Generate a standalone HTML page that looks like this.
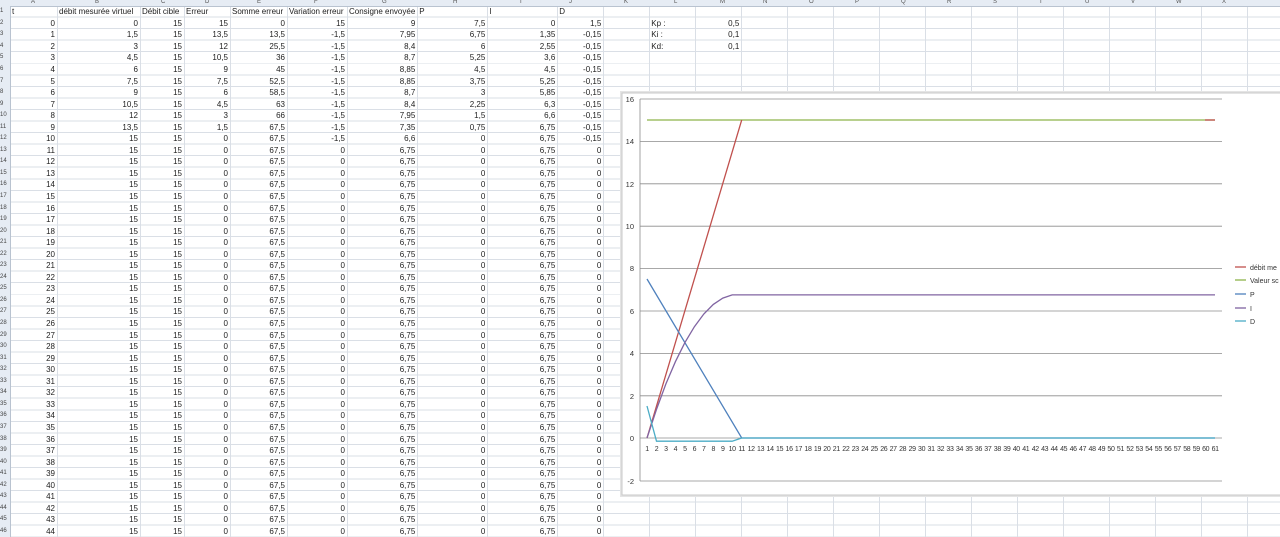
<!DOCTYPE html>
<html><head><meta charset="utf-8"><style>
body{margin:0;width:1280px;height:537px;overflow:hidden;background:#fff;position:relative;font-family:"Liberation Sans",sans-serif;}
#g{position:absolute;left:0;top:6px;width:1280px;height:531px;background:repeating-linear-gradient(to bottom,transparent 0,transparent 10.55px,#dadfe6 10.55px,#dadfe6 11.55px);}
.v{position:absolute;top:0;width:1px;height:537px;background:#dadfe6;}
#hdr{position:absolute;left:0;top:0;width:1280px;height:6px;background:#e6ecf4;border-bottom:1px solid #b9c3d0;font-size:6px;color:#555;}
#hdr span{position:absolute;top:-1px;}
#rh{position:absolute;left:0;top:6px;width:10px;height:531px;background:#e6ecf4;border-right:1px solid #b9c3d0;}
table{position:absolute;left:0;top:6px;border-collapse:collapse;table-layout:fixed;font-size:8px;color:#222;}
td{height:11.55px;padding:0 2px;white-space:nowrap;overflow:hidden;text-align:right;line-height:11px;box-sizing:border-box;}
td.l{text-align:left;}
td.r0{font-size:6px;color:#444;text-align:left;padding:0;}
</style></head><body>
<div id="g"></div>
<div class="v" style="left:57px"></div><div class="v" style="left:140px"></div><div class="v" style="left:184px"></div><div class="v" style="left:230px"></div><div class="v" style="left:287px"></div><div class="v" style="left:347px"></div><div class="v" style="left:417px"></div><div class="v" style="left:487px"></div><div class="v" style="left:557px"></div><div class="v" style="left:603px"></div><div class="v" style="left:649px"></div><div class="v" style="left:695px"></div><div class="v" style="left:741px"></div><div class="v" style="left:787px"></div><div class="v" style="left:833px"></div><div class="v" style="left:879px"></div><div class="v" style="left:925px"></div><div class="v" style="left:971px"></div><div class="v" style="left:1017px"></div><div class="v" style="left:1063px"></div><div class="v" style="left:1109px"></div><div class="v" style="left:1155px"></div><div class="v" style="left:1201px"></div><div class="v" style="left:1247px"></div>
<div id="hdr"><span style="left:31px">A</span><span style="left:95px">B</span><span style="left:161px">C</span><span style="left:205px">D</span><span style="left:257px">E</span><span style="left:314px">F</span><span style="left:382px">G</span><span style="left:453px">H</span><span style="left:520px">I</span><span style="left:569px">J</span><span style="left:624px">K</span><span style="left:674px">L</span><span style="left:720px">M</span><span style="left:763px">N</span><span style="left:809px">O</span><span style="left:855px">P</span><span style="left:901px">Q</span><span style="left:947px">R</span><span style="left:993px">S</span><span style="left:1039px">T</span><span style="left:1085px">U</span><span style="left:1131px">V</span><span style="left:1176px">W</span><span style="left:1222px">X</span></div>
<div id="rh"></div>
<table>
<colgroup><col style="width:10px"><col style="width:47px"><col style="width:83px"><col style="width:44px"><col style="width:46px"><col style="width:57px"><col style="width:60px"><col style="width:70px"><col style="width:70px"><col style="width:70px"><col style="width:46px"><col style="width:46px"><col style="width:46px"><col style="width:46px"></colgroup>
<tr><td class="r0">1</td><td class="l">t</td><td class="l">débit mesurée virtuel</td><td class="l">Débit cible</td><td class="l">Erreur</td><td class="l">Somme erreur</td><td class="l">Variation erreur</td><td class="l">Consigne envoyée</td><td class="l">P</td><td class="l">I</td><td class="l">D</td><td></td><td></td><td></td></tr>
<tr><td class="r0">2</td><td>0</td><td>0</td><td>15</td><td>15</td><td>0</td><td>15</td><td>9</td><td>7,5</td><td>0</td><td>1,5</td><td></td><td class="l">Kp :</td><td>0,5</td></tr>
<tr><td class="r0">3</td><td>1</td><td>1,5</td><td>15</td><td>13,5</td><td>13,5</td><td>-1,5</td><td>7,95</td><td>6,75</td><td>1,35</td><td>-0,15</td><td></td><td class="l">Ki :</td><td>0,1</td></tr>
<tr><td class="r0">4</td><td>2</td><td>3</td><td>15</td><td>12</td><td>25,5</td><td>-1,5</td><td>8,4</td><td>6</td><td>2,55</td><td>-0,15</td><td></td><td class="l">Kd:</td><td>0,1</td></tr>
<tr><td class="r0">5</td><td>3</td><td>4,5</td><td>15</td><td>10,5</td><td>36</td><td>-1,5</td><td>8,7</td><td>5,25</td><td>3,6</td><td>-0,15</td></tr>
<tr><td class="r0">6</td><td>4</td><td>6</td><td>15</td><td>9</td><td>45</td><td>-1,5</td><td>8,85</td><td>4,5</td><td>4,5</td><td>-0,15</td></tr>
<tr><td class="r0">7</td><td>5</td><td>7,5</td><td>15</td><td>7,5</td><td>52,5</td><td>-1,5</td><td>8,85</td><td>3,75</td><td>5,25</td><td>-0,15</td></tr>
<tr><td class="r0">8</td><td>6</td><td>9</td><td>15</td><td>6</td><td>58,5</td><td>-1,5</td><td>8,7</td><td>3</td><td>5,85</td><td>-0,15</td></tr>
<tr><td class="r0">9</td><td>7</td><td>10,5</td><td>15</td><td>4,5</td><td>63</td><td>-1,5</td><td>8,4</td><td>2,25</td><td>6,3</td><td>-0,15</td></tr>
<tr><td class="r0">10</td><td>8</td><td>12</td><td>15</td><td>3</td><td>66</td><td>-1,5</td><td>7,95</td><td>1,5</td><td>6,6</td><td>-0,15</td></tr>
<tr><td class="r0">11</td><td>9</td><td>13,5</td><td>15</td><td>1,5</td><td>67,5</td><td>-1,5</td><td>7,35</td><td>0,75</td><td>6,75</td><td>-0,15</td></tr>
<tr><td class="r0">12</td><td>10</td><td>15</td><td>15</td><td>0</td><td>67,5</td><td>-1,5</td><td>6,6</td><td>0</td><td>6,75</td><td>-0,15</td></tr>
<tr><td class="r0">13</td><td>11</td><td>15</td><td>15</td><td>0</td><td>67,5</td><td>0</td><td>6,75</td><td>0</td><td>6,75</td><td>0</td></tr>
<tr><td class="r0">14</td><td>12</td><td>15</td><td>15</td><td>0</td><td>67,5</td><td>0</td><td>6,75</td><td>0</td><td>6,75</td><td>0</td></tr>
<tr><td class="r0">15</td><td>13</td><td>15</td><td>15</td><td>0</td><td>67,5</td><td>0</td><td>6,75</td><td>0</td><td>6,75</td><td>0</td></tr>
<tr><td class="r0">16</td><td>14</td><td>15</td><td>15</td><td>0</td><td>67,5</td><td>0</td><td>6,75</td><td>0</td><td>6,75</td><td>0</td></tr>
<tr><td class="r0">17</td><td>15</td><td>15</td><td>15</td><td>0</td><td>67,5</td><td>0</td><td>6,75</td><td>0</td><td>6,75</td><td>0</td></tr>
<tr><td class="r0">18</td><td>16</td><td>15</td><td>15</td><td>0</td><td>67,5</td><td>0</td><td>6,75</td><td>0</td><td>6,75</td><td>0</td></tr>
<tr><td class="r0">19</td><td>17</td><td>15</td><td>15</td><td>0</td><td>67,5</td><td>0</td><td>6,75</td><td>0</td><td>6,75</td><td>0</td></tr>
<tr><td class="r0">20</td><td>18</td><td>15</td><td>15</td><td>0</td><td>67,5</td><td>0</td><td>6,75</td><td>0</td><td>6,75</td><td>0</td></tr>
<tr><td class="r0">21</td><td>19</td><td>15</td><td>15</td><td>0</td><td>67,5</td><td>0</td><td>6,75</td><td>0</td><td>6,75</td><td>0</td></tr>
<tr><td class="r0">22</td><td>20</td><td>15</td><td>15</td><td>0</td><td>67,5</td><td>0</td><td>6,75</td><td>0</td><td>6,75</td><td>0</td></tr>
<tr><td class="r0">23</td><td>21</td><td>15</td><td>15</td><td>0</td><td>67,5</td><td>0</td><td>6,75</td><td>0</td><td>6,75</td><td>0</td></tr>
<tr><td class="r0">24</td><td>22</td><td>15</td><td>15</td><td>0</td><td>67,5</td><td>0</td><td>6,75</td><td>0</td><td>6,75</td><td>0</td></tr>
<tr><td class="r0">25</td><td>23</td><td>15</td><td>15</td><td>0</td><td>67,5</td><td>0</td><td>6,75</td><td>0</td><td>6,75</td><td>0</td></tr>
<tr><td class="r0">26</td><td>24</td><td>15</td><td>15</td><td>0</td><td>67,5</td><td>0</td><td>6,75</td><td>0</td><td>6,75</td><td>0</td></tr>
<tr><td class="r0">27</td><td>25</td><td>15</td><td>15</td><td>0</td><td>67,5</td><td>0</td><td>6,75</td><td>0</td><td>6,75</td><td>0</td></tr>
<tr><td class="r0">28</td><td>26</td><td>15</td><td>15</td><td>0</td><td>67,5</td><td>0</td><td>6,75</td><td>0</td><td>6,75</td><td>0</td></tr>
<tr><td class="r0">29</td><td>27</td><td>15</td><td>15</td><td>0</td><td>67,5</td><td>0</td><td>6,75</td><td>0</td><td>6,75</td><td>0</td></tr>
<tr><td class="r0">30</td><td>28</td><td>15</td><td>15</td><td>0</td><td>67,5</td><td>0</td><td>6,75</td><td>0</td><td>6,75</td><td>0</td></tr>
<tr><td class="r0">31</td><td>29</td><td>15</td><td>15</td><td>0</td><td>67,5</td><td>0</td><td>6,75</td><td>0</td><td>6,75</td><td>0</td></tr>
<tr><td class="r0">32</td><td>30</td><td>15</td><td>15</td><td>0</td><td>67,5</td><td>0</td><td>6,75</td><td>0</td><td>6,75</td><td>0</td></tr>
<tr><td class="r0">33</td><td>31</td><td>15</td><td>15</td><td>0</td><td>67,5</td><td>0</td><td>6,75</td><td>0</td><td>6,75</td><td>0</td></tr>
<tr><td class="r0">34</td><td>32</td><td>15</td><td>15</td><td>0</td><td>67,5</td><td>0</td><td>6,75</td><td>0</td><td>6,75</td><td>0</td></tr>
<tr><td class="r0">35</td><td>33</td><td>15</td><td>15</td><td>0</td><td>67,5</td><td>0</td><td>6,75</td><td>0</td><td>6,75</td><td>0</td></tr>
<tr><td class="r0">36</td><td>34</td><td>15</td><td>15</td><td>0</td><td>67,5</td><td>0</td><td>6,75</td><td>0</td><td>6,75</td><td>0</td></tr>
<tr><td class="r0">37</td><td>35</td><td>15</td><td>15</td><td>0</td><td>67,5</td><td>0</td><td>6,75</td><td>0</td><td>6,75</td><td>0</td></tr>
<tr><td class="r0">38</td><td>36</td><td>15</td><td>15</td><td>0</td><td>67,5</td><td>0</td><td>6,75</td><td>0</td><td>6,75</td><td>0</td></tr>
<tr><td class="r0">39</td><td>37</td><td>15</td><td>15</td><td>0</td><td>67,5</td><td>0</td><td>6,75</td><td>0</td><td>6,75</td><td>0</td></tr>
<tr><td class="r0">40</td><td>38</td><td>15</td><td>15</td><td>0</td><td>67,5</td><td>0</td><td>6,75</td><td>0</td><td>6,75</td><td>0</td></tr>
<tr><td class="r0">41</td><td>39</td><td>15</td><td>15</td><td>0</td><td>67,5</td><td>0</td><td>6,75</td><td>0</td><td>6,75</td><td>0</td></tr>
<tr><td class="r0">42</td><td>40</td><td>15</td><td>15</td><td>0</td><td>67,5</td><td>0</td><td>6,75</td><td>0</td><td>6,75</td><td>0</td></tr>
<tr><td class="r0">43</td><td>41</td><td>15</td><td>15</td><td>0</td><td>67,5</td><td>0</td><td>6,75</td><td>0</td><td>6,75</td><td>0</td></tr>
<tr><td class="r0">44</td><td>42</td><td>15</td><td>15</td><td>0</td><td>67,5</td><td>0</td><td>6,75</td><td>0</td><td>6,75</td><td>0</td></tr>
<tr><td class="r0">45</td><td>43</td><td>15</td><td>15</td><td>0</td><td>67,5</td><td>0</td><td>6,75</td><td>0</td><td>6,75</td><td>0</td></tr>
<tr><td class="r0">46</td><td>44</td><td>15</td><td>15</td><td>0</td><td>67,5</td><td>0</td><td>6,75</td><td>0</td><td>6,75</td><td>0</td></tr>
</table>
<svg style="position:absolute;left:0;top:0" width="1280" height="537" font-family="Liberation Sans, sans-serif" font-size="7.5" fill="#333">
<rect x="620" y="91" width="662" height="406" fill="#e4e4e4"/>
<rect x="622" y="93" width="660" height="402" fill="#fff" stroke="#c8c8c8"/>
<g stroke="#8c8c8c" stroke-width="0.8">
<line x1="640" y1="99" x2="1222" y2="99"/><line x1="640" y1="141.4" x2="1222" y2="141.4"/><line x1="640" y1="183.8" x2="1222" y2="183.8"/><line x1="640" y1="226.2" x2="1222" y2="226.2"/><line x1="640" y1="268.6" x2="1222" y2="268.6"/><line x1="640" y1="311" x2="1222" y2="311"/><line x1="640" y1="353.4" x2="1222" y2="353.4"/><line x1="640" y1="395.8" x2="1222" y2="395.8"/><line x1="640" y1="438" x2="1222" y2="438"/><line x1="640" y1="481" x2="1222" y2="481"/>
<line x1="640" y1="99" x2="640" y2="481"/>
</g>
<g text-anchor="end"><text x="634" y="102">16</text><text x="634" y="144">14</text><text x="634" y="187">12</text><text x="634" y="229">10</text><text x="634" y="271">8</text><text x="634" y="314">6</text><text x="634" y="356">4</text><text x="634" y="399">2</text><text x="634" y="441">0</text><text x="634" y="484">-2</text></g>
<g font-size="7" text-anchor="middle" letter-spacing="-0.3">
<text x="647" y="451">1</text><text x="656.5" y="451">2</text><text x="665.9" y="451">3</text><text x="675.4" y="451">4</text><text x="684.9" y="451">5</text><text x="694.4" y="451">6</text><text x="703.8" y="451">7</text><text x="713.3" y="451">8</text><text x="722.8" y="451">9</text><text x="732.2" y="451">10</text><text x="741.7" y="451">11</text><text x="751.2" y="451">12</text><text x="760.6" y="451">13</text><text x="770.1" y="451">14</text><text x="779.6" y="451">15</text><text x="789.1" y="451">16</text><text x="798.5" y="451">17</text><text x="808" y="451">18</text><text x="817.5" y="451">19</text><text x="826.9" y="451">20</text><text x="836.4" y="451">21</text><text x="845.9" y="451">22</text><text x="855.3" y="451">23</text><text x="864.8" y="451">24</text><text x="874.3" y="451">25</text><text x="883.8" y="451">26</text><text x="893.2" y="451">27</text><text x="902.7" y="451">28</text><text x="912.2" y="451">29</text><text x="921.6" y="451">30</text><text x="931.1" y="451">31</text><text x="940.6" y="451">32</text><text x="950" y="451">33</text><text x="959.5" y="451">34</text><text x="969" y="451">35</text><text x="978.5" y="451">36</text><text x="987.9" y="451">37</text><text x="997.4" y="451">38</text><text x="1006.9" y="451">39</text><text x="1016.3" y="451">40</text><text x="1025.8" y="451">41</text><text x="1035.3" y="451">42</text><text x="1044.7" y="451">43</text><text x="1054.2" y="451">44</text><text x="1063.7" y="451">45</text><text x="1073.2" y="451">46</text><text x="1082.6" y="451">47</text><text x="1092.1" y="451">48</text><text x="1101.6" y="451">49</text><text x="1111" y="451">50</text><text x="1120.5" y="451">51</text><text x="1130" y="451">52</text><text x="1139.4" y="451">53</text><text x="1148.9" y="451">54</text><text x="1158.4" y="451">55</text><text x="1167.9" y="451">56</text><text x="1177.3" y="451">57</text><text x="1186.8" y="451">58</text><text x="1196.3" y="451">59</text><text x="1205.7" y="451">60</text><text x="1215.2" y="451">61</text>
</g>
<g fill="none" stroke-width="1.3">
<polyline stroke="#8db34a" points="647,120 1215,120"/>
<polyline stroke="#c0504d" points="647,438 741.7,120"/>
<polyline stroke="#c0504d" points="1205,120 1215,120"/>
<polyline stroke="#4f81bd" points="647,279 741.7,438 1215,438"/>
<polyline stroke="#8064a2" points="647,438 656.5,409.4 665.9,383.9 675.4,361.7 684.9,342.6 694.4,326.7 703.8,314 713.3,304.4 722.8,298.1 732.2,294.9 1215,294.9"/>
<polyline stroke="#4bacc6" points="647,406 656.5,441.2 732.2,441.2 741.7,438 1215,438"/>
</g>
<g stroke-width="1.3"><line x1="1235" y1="267" x2="1246" y2="267" stroke="#c0504d"/><line x1="1235" y1="280" x2="1246" y2="280" stroke="#8db34a"/><line x1="1235" y1="294" x2="1246" y2="294" stroke="#4f81bd"/><line x1="1235" y1="308" x2="1246" y2="308" stroke="#8064a2"/><line x1="1235" y1="321" x2="1246" y2="321" stroke="#4bacc6"/></g>
<g font-size="7"><text x="1250" y="270">débit me</text><text x="1250" y="283">Valeur sc</text><text x="1250" y="297">P</text><text x="1250" y="311">I</text><text x="1250" y="324">D</text></g>
</svg>
</body></html>
